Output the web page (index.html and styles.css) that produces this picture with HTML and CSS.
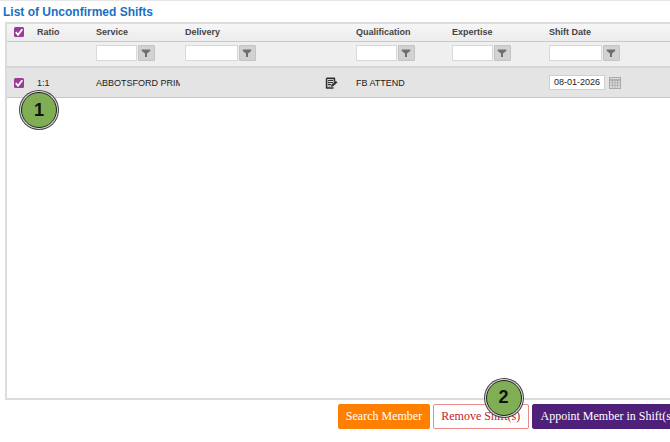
FILE: index.html
```html
<!DOCTYPE html>
<html lang="en">
<head>
<meta charset="utf-8">
<title>List of Unconfirmed Shifts</title>
<link rel="stylesheet" href="styles.css">
</head>
<body>
<div class="page">
  <h1 class="title">List of Unconfirmed Shifts</h1>
  <div class="grid">
    <div class="row head">
      <div class="cell first"><span class="check"><svg viewBox="0 0 10 10" width="10" height="10"><path d="M1.800 5.200 4 7.800 8.300 2.200" fill="none" stroke="#fff" stroke-width="1.800"/></svg></span></div>
      <div class="cell">Ratio</div>
      <div class="cell">Service</div>
      <div class="cell">Delivery</div>
      <div class="cell">Qualification</div>
      <div class="cell">Expertise</div>
      <div class="cell">Shift Date</div>
    </div>
    <div class="row filters">
      <div class="cell first"></div>
      <div class="cell"></div>
      <div class="cell"><input class="finput w41" type="text"><span class="fbtn"><svg viewBox="0 0 10 10" width="10" height="10"><path d="M0.800 1.500h8.400v1.500L6 5.600V9H4V5.600L0.800 3z" fill="#6e6e6e"/></svg></span></div>
      <div class="cell"><input class="finput w53" type="text"><span class="fbtn"><svg viewBox="0 0 10 10" width="10" height="10"><path d="M0.800 1.500h8.400v1.500L6 5.600V9H4V5.600L0.800 3z" fill="#6e6e6e"/></svg></span></div>
      <div class="cell"><input class="finput w41" type="text"><span class="fbtn"><svg viewBox="0 0 10 10" width="10" height="10"><path d="M0.800 1.500h8.400v1.500L6 5.600V9H4V5.600L0.800 3z" fill="#6e6e6e"/></svg></span></div>
      <div class="cell"><input class="finput w41" type="text"><span class="fbtn"><svg viewBox="0 0 10 10" width="10" height="10"><path d="M0.800 1.500h8.400v1.500L6 5.600V9H4V5.600L0.800 3z" fill="#6e6e6e"/></svg></span></div>
      <div class="cell"><input class="finput w53" type="text"><span class="fbtn"><svg viewBox="0 0 10 10" width="10" height="10"><path d="M0.800 1.500h8.400v1.500L6 5.600V9H4V5.600L0.800 3z" fill="#6e6e6e"/></svg></span></div>
    </div>
    <div class="row data">
      <div class="cell first"><span class="check"><svg viewBox="0 0 10 10" width="10" height="10"><path d="M1.800 5.200 4 7.800 8.300 2.200" fill="none" stroke="#fff" stroke-width="1.800"/></svg></span></div>
      <div class="cell">1:1</div>
      <div class="cell"><span class="clip">ABBOTSFORD PRIMARY</span></div>
      <div class="cell end"><svg class="note" viewBox="0 0 13 12" width="13" height="12"><path d="M1.500 1.200H9.500V5M8.500 11H1.500V1.200" fill="#bdbdbd" stroke="#2e2e2e" stroke-width="1.400" stroke-linejoin="round"/><path d="M3 3.500h5M3 5.500h5M3 7.500h3" stroke="#333" stroke-width="1"/><path d="M5.600 10.200 6.200 7.800 10.800 3.600 12.600 5.400 8 9.600z" fill="#2e2e2e" stroke="#e4e4e4" stroke-width=".4"/></svg></div>
      <div class="cell">FB ATTEND</div>
      <div class="cell"></div>
      <div class="cell"><span class="date">08-01-2026</span><svg class="cal" viewBox="0 0 12 12" width="12" height="12"><rect x=".5" y=".5" width="11" height="11" fill="#dcdcdc" stroke="#aaa"/><path d="M1 3h10" stroke="#a0a0a0" stroke-width="1.500"/><path d="M1 5.700h10M1 8.300h10M3.500 4v7.500M6 4v7.500M8.500 4v7.500" stroke="#a8a8a8" stroke-width=".7"/></svg></div>
    </div>
  </div>
  <div class="actions">
    <button class="btn search" type="button">Search Member</button>
    <button class="btn remove" type="button">Remove Shift(s)</button>
    <button class="btn appoint" type="button">Appoint Member in Shift(s)</button>
  </div>
  <span class="badge one">1</span>
  <span class="badge two">2</span>
</div>
</body>
</html>
```
FILE: styles.css
```css
* { box-sizing: border-box; }
html, body { margin: 0; padding: 0; background: #fff; }
body { width: 670px; height: 442px; overflow: hidden; font-family: "Liberation Sans", Arial, sans-serif; }
.page { position: relative; width: 670px; height: 442px; border-top: 1px solid #e6e6e6; padding-top: 4px; overflow: hidden; }
.title { margin: 0 0 0 3px; height: 17px; font-size: 12px; line-height: 14px; font-weight: bold; color: #1b6fc2; }
.grid { margin-left: 5px; width: 680px; height: 378px; border-top: 2px solid #dcdcdc; border-left: 2px solid #dcdcdc; border-bottom: 2px solid #dcdcdc; }
.row { display: grid; grid-template-columns: 25px 59px 89px 171px 96px 97px 1fr; align-items: center; font-size: 9px; color: #222; }
.cell { display: flex; align-items: center; padding-left: 5px; min-width: 0; }
.first { padding-left: 7px; }
.head { height: 18px; padding-bottom: 1px; background: linear-gradient(#f6f6f6, #ececec); border-bottom: 1px solid #c9c9c9; font-weight: bold; color: #444; }
.filters { height: 26px; padding-bottom: 2px; background: #efefef; border-bottom: 2px solid #d6d6d6; }
.filters .cell { padding-left: 4.500px; }
.data { height: 30px; background: #e4e4e4; border-bottom: 1px solid #c8c8c8; }
.check { display: flex; align-items: center; justify-content: center; width: 10px; height: 10px; border-radius: 1.500px; background: #9c3a9a; }
.finput { height: 16px; padding: 0; border: 1px solid #d9d9d9; background: #fff; margin: 0; }
.w41 { width: 41px; }
.w53 { width: 53px; }
.fbtn { display: flex; align-items: center; justify-content: center; width: 16.500px; height: 16px; margin-left: 1.500px; background: #d2d2d2; border: 1px solid #c4c4c4; border-radius: 1px; }
.clip { display: block; width: 84px; overflow: hidden; white-space: nowrap; }
.end { justify-content: flex-end; padding-right: 13px; }
.note { display: block; }
.date { display: block; width: 56px; height: 15px; padding-left: 4px; line-height: 13px; font-size: 9px; background: #fff; border: 1px solid #d0d0d0; }
.cal { margin-left: 3.500px; }
.actions { display: flex; gap: 3px; margin: 4px 0 0 338px; width: 340px; }
.btn { flex: none; height: 25px; padding: 0; font-family: "Liberation Serif", "Times New Roman", serif; font-size: 12px; border-radius: 2px; white-space: nowrap; }
.search { width: 92px; background: #ff7f00; border: 1px solid #ff7f00; color: #fff; }
.remove { width: 95.500px; background: #fff; border: 1px solid #ef8a8a; color: #c8202a; }
.appoint { width: 150px; background: #4f2079; border: 1px solid #4f2079; color: #fff; text-align: left; padding-left: 8px; }
.badge { position: absolute; display: flex; align-items: center; justify-content: center; width: 36px; height: 36px; border-radius: 50%; background: #7fae55; border: 1px solid #222; box-shadow: 0 0 0 1px #ddd, 0 0 0 2px #444; font-size: 18px; font-weight: bold; color: #111; }
.one { left: 21px; top: 91px; }
.two { left: 485.500px; top: 378.500px; }
```
